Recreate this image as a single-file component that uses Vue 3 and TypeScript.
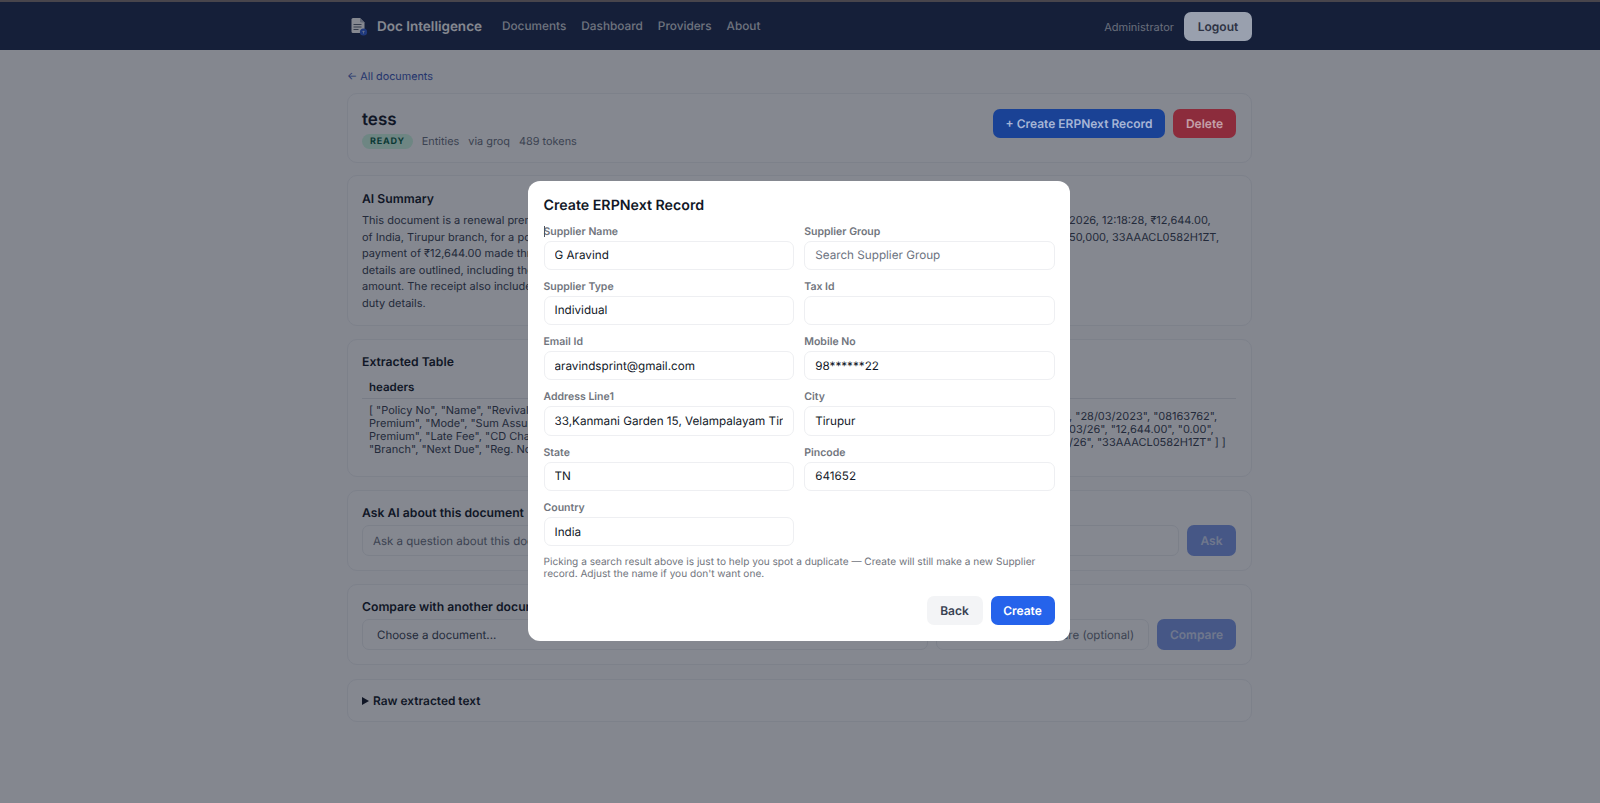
<template>
  <div class="app">
    <div class="top-strip"></div>
    <header class="navbar">
      <div class="navbar__inner">
        <div class="brand">
          <svg class="brand__icon" width="24" height="24" viewBox="0 0 24 24" aria-hidden="true">
            <path d="M6 3h7l4.5 4.5V16a2 2 0 0 1-2 2H6a1.5 1.5 0 0 1-1.5-1.5v-12A1.5 1.5 0 0 1 6 3z" fill="#ffffff" />
            <path d="M13 3v3.5A1 1 0 0 0 14 7.5h3.5z" fill="#b9c0cc" />
            <path d="M6.5 9.5h8M6.5 12h8M6.5 14.5h5" stroke="#5b6474" stroke-width="1.1" fill="none" />
            <circle cx="16.5" cy="17" r="3.6" fill="#2f5fd8" />
            <path d="M16.5 18.6v-2.6M15.4 17l1.1-1.1 1.1 1.1" stroke="#dbe6ff" stroke-width=".7" fill="none" />
          </svg>
          <span class="brand__name">Doc Intelligence</span>
        </div>
        <nav class="nav">
          <a v-for="item in navItems" :key="item">{{ item }}</a>
        </nav>
        <div class="user">
          <span>Administrator</span>
          <button class="btn btn--logout lifted">Logout</button>
        </div>
      </div>
    </header>

    <main class="page">
      <a class="back">← All documents</a>

      <section class="card title-card">
        <div>
          <h1>tess</h1>
          <div class="meta">
            <span class="badge">READY</span>
            <span>Entities</span>
            <span>via groq</span>
            <span>489 tokens</span>
          </div>
        </div>
        <div class="actions">
          <button class="btn btn--primary lifted">+ Create ERPNext Record</button>
          <button class="btn btn--danger lifted">Delete</button>
        </div>
      </section>

      <section class="card summary-card">
        <h2>AI Summary</h2>
        <div class="summary">
          <div v-for="(row, i) in summaryRows" :key="i" class="split">
            <span class="split__left">{{ row[0] }}</span>
            <span>{{ row[1] }}</span>
          </div>
        </div>
      </section>

      <section class="card">
        <h2>Extracted Table</h2>
        <div class="table-head">headers</div>
        <div class="table-body">
          <div class="table-cell table-cell--left">
            <div v-for="line in headerLines" :key="line">{{ line }}</div>
          </div>
          <div class="table-cell table-cell--right">
            <div v-for="line in rowLines" :key="line">{{ line }}</div>
          </div>
        </div>
      </section>

      <section class="card">
        <h2>Ask AI about this document</h2>
        <div class="control-row">
          <input class="control control--grow" placeholder="Ask a question about this document..." />
          <button class="btn btn--muted btn--ask">Ask</button>
        </div>
      </section>

      <section class="card">
        <h2>Compare with another document</h2>
        <div class="control-row">
          <select class="control control--grow control--select">
            <option>Choose a document...</option>
          </select>
          <input class="control control--focus" placeholder="Which fields to compare (optional)" />
          <button class="btn btn--muted btn--compare">Compare</button>
        </div>
      </section>

      <section class="card raw">
        <span class="raw__arrow"></span>
        <span>Raw extracted text</span>
      </section>
    </main>

    <div class="overlay">
      <div class="modal">
        <h3>Create ERPNext Record</h3>
        <div class="form-grid">
          <label v-for="(field, i) in fields" :key="field.label" class="field">
            <span class="field__label">
              <i v-if="i === 0" class="caret"></i>{{ field.label }}
            </span>
            <input class="field__input" :value="field.value" :placeholder="field.placeholder" />
          </label>
        </div>
        <p class="hint">
          Picking a search result above is just to help you spot a duplicate — Create will still make a new Supplier
          record. Adjust the name if you don't want one.
        </p>
        <div class="modal__actions">
          <button class="btn btn--back">Back</button>
          <button class="btn btn--create">Create</button>
        </div>
      </div>
    </div>
  </div>
</template>

<script setup lang="ts">
interface Field {
  label: string;
  value?: string;
  placeholder?: string;
}

const navItems = ['Documents', 'Dashboard', 'Providers', 'About'];

// left part runs under the modal, right part starts where the modal ends
const summaryRows: [string, string][] = [
  ['This document is a renewal premium receipt issued by the Life Insurance Corporation', '2026, 12:18:28, ₹12,644.00,'],
  ['of India, Tirupur branch, for a policy held by the named policyholder', '50,000, 33AAACL0582H1ZT,'],
  ['payment of ₹12,644.00 made through the listed channel on the receipt date', ''],
  ['details are outlined, including the plan, mode, sum assured and premium', ''],
  ['amount. The receipt also includes the GST registration number and stamp', ''],
  ['duty details.', '']
];

const headerLines = [
  '[ "Policy No", "Name", "Revival Date", "Receipt No", "Plan", "Term"',
  'Premium", "Mode", "Sum Assured", "Date of Commencement", "Agent"',
  'Premium", "Late Fee", "CD Charges", "GST", "Total Amount"',
  '"Branch", "Next Due", "Reg. No" ]'
];

const rowLines = [', "28/03/2023", "08163762",', '03/26", "12,644.00", "0.00",', '/26", "33AAACL0582H1ZT" ] ]'];

const fields: Field[] = [
  { label: 'Supplier Name', value: 'G Aravind' },
  { label: 'Supplier Group', placeholder: 'Search Supplier Group' },
  { label: 'Supplier Type', value: 'Individual' },
  { label: 'Tax Id', value: '' },
  { label: 'Email Id', value: 'aravindsprint@gmail.com' },
  { label: 'Mobile No', value: '98******22' },
  { label: 'Address Line1', value: '33,Kanmani Garden 15, Velampalayam Tirupur' },
  { label: 'City', value: 'Tirupur' },
  { label: 'State', value: 'TN' },
  { label: 'Pincode', value: '641652' },
  { label: 'Country', value: 'India' }
];
</script>

<style>
html,
body {
  margin: 0;
  background: #fcfcfd;
}
</style>

<style scoped>
.app {
  min-height: 803px;
  background: #fcfcfd;
  color: #111827;
  font-family: Inter, "Liberation Sans", sans-serif;
  text-rendering: geometricPrecision;
}

.top-strip {
  height: 2px;
  background: #837674;
}

.navbar {
  height: 48px;
  background: #1c2a4f;
}

.navbar__inner {
  display: flex;
  align-items: center;
  width: 905px;
  height: 100%;
  margin-left: 347px;
}

.brand {
  display: flex;
  align-items: center;
  gap: 6px;
  color: #ffffff;
  font-size: 13.5px;
  font-weight: 600;
}

.brand__icon {
  flex-shrink: 0;
  margin-top: 2px;
}

.brand__name {
  margin-top: 1px;
}

.nav {
  display: flex;
  gap: 15px;
  margin-bottom: 1px;
  margin-left: 20px;
  color: #d1d5db;
  font-size: 11.8px;
  font-weight: 500;
}

.user {
  display: flex;
  align-items: center;
  gap: 10px;
  margin-left: auto;
  color: #c4c9d4;
  font-size: 11px;
}

.user span {
  margin-top: 2px;
}

.btn {
  border: 0;
  border-radius: 7px;
  font-family: inherit;
  font-size: 12px;
  font-weight: 600;
  text-rendering: geometricPrecision;
}

.lifted {
  position: relative;
  z-index: 20;
}

.btn--logout {
  width: 68px;
  height: 29px;
  background: #99a0ae;
  color: #2e3344;
}

.page {
  width: 905px;
  margin-left: 347px;
  padding-top: 20px;
}

.back {
  display: block;
  height: 14px;
  margin-bottom: 9px;
  color: #3a57b8;
  font-size: 10.8px;
  line-height: 14px;
}

.card {
  box-sizing: border-box;
  margin-bottom: 13px;
  padding: 14px 15px 14px 14px;
  border: 1px solid #eef0f3;
  border-radius: 10px;
  background: #ffffff;
}

.card h2 {
  margin: 0;
  font-size: 12.2px;
  font-weight: 600;
  line-height: 16px;
}

.title-card {
  display: flex;
  align-items: flex-start;
  justify-content: space-between;
  height: 70px;
  margin-bottom: 12px;
  padding: 15px 15px 0 14px;
}

.title-card h1 {
  margin: 1px 0 3px;
  font-size: 17px;
  font-weight: 600;
  line-height: 20px;
}

.meta {
  display: flex;
  align-items: center;
  gap: 9px;
  color: #6b7280;
  font-size: 10.9px;
}

.badge {
  margin-top: 1px;
  padding: 1px 8px;
  border-radius: 999px;
  background: #d1fae5;
  color: #065f46;
  font-size: 9px;
  font-weight: 700;
  letter-spacing: 0.8px;
  line-height: 13px;
}

.actions {
  display: flex;
  gap: 8px;
}

.btn--primary {
  width: 172px;
  height: 29px;
  background: #1a4295;
  color: #a6b5d6;
}

.btn--danger {
  width: 63px;
  height: 29px;
  background: #8c2c3c;
  color: #c4a0a9;
}

.summary-card {
  padding-top: 15px;
}

.summary {
  margin-top: 5px;
  color: #374151;
  font-size: 11px;
  line-height: 16.5px;
}

.split {
  display: flex;
  white-space: nowrap;
}

.split__left {
  flex: none;
  width: 707px;
  overflow: hidden;
}

.table-head {
  margin-top: 10px;
  padding: 0 7px 3px;
  border-bottom: 1px solid #e5e7eb;
  font-size: 11.5px;
  font-weight: 600;
  line-height: 15px;
}

.table-body {
  display: flex;
  padding: 5px 0 6px 7px;
  color: #374151;
  font-size: 11px;
  line-height: 13px;
  white-space: nowrap;
}

.table-cell--left {
  flex: none;
  width: 700px;
  overflow: hidden;
}

.table-cell--right {
  padding-top: 6px;
}

.control-row {
  display: flex;
  gap: 8px;
  margin-top: 4px;
}

.control {
  box-sizing: border-box;
  height: 31px;
  padding: 0 10px;
  border: 1px solid #eceef1;
  border-radius: 7px;
  background: #ffffff;
  color: #111827;
  font-family: inherit;
  font-size: 11.5px;
  text-rendering: geometricPrecision;
}

.control::placeholder {
  color: #6b7280;
}

.control--grow {
  flex: 1;
  min-width: 0;
}

.control--focus {
  flex: none;
  width: 213px;
}

.control--select {
  color: #374151;
}

.btn--muted {
  height: 31px;
  background: #7f9bea;
  color: #d3ddf7;
}

.btn--ask {
  width: 49px;
}

.btn--compare {
  width: 79px;
}

.raw {
  display: flex;
  align-items: center;
  gap: 4px;
  height: 43px;
  margin-top: 14px;
  padding: 0 14px;
  font-size: 11.9px;
  font-weight: 600;
}

.raw__arrow {
  width: 0;
  height: 0;
  border-top: 4px solid transparent;
  border-bottom: 4px solid transparent;
  border-left: 7px solid #111827;
}

.overlay {
  position: fixed;
  inset: 0;
  z-index: 10;
  display: flex;
  justify-content: center;
  align-items: flex-start;
  padding-top: 181px;
  background: rgba(16, 22, 38, 0.51);
}

.modal {
  position: relative;
  z-index: 30;
  box-sizing: border-box;
  width: 542px;
  height: 460px;
  margin-left: -2px;
  padding: 16px 15.5px;
  border-radius: 12px;
  background: #ffffff;
}

.modal h3 {
  margin: 0 0 9.5px;
  color: #111827;
  font-size: 14.2px;
  font-weight: 600;
  line-height: 18px;
}

.form-grid {
  display: grid;
  grid-template-columns: 1fr 1fr;
  gap: 10px 10.5px;
}

.field {
  display: block;
  min-width: 0;
}

.field__label {
  position: relative;
  display: block;
  margin-bottom: 3px;
  color: #71757d;
  font-size: 10.5px;
  font-weight: 600;
  line-height: 13px;
}

.caret {
  position: absolute;
  top: 1px;
  left: 0;
  width: 1px;
  height: 11px;
  background: #4b5563;
}

.field__input {
  display: block;
  box-sizing: border-box;
  width: 100%;
  height: 29.3px;
  padding: 0 10px;
  border: 1px solid #eeeff2;
  border-radius: 7px;
  background: #ffffff;
  color: #111827;
  font-family: inherit;
  font-size: 11.7px;
  text-rendering: geometricPrecision;
}

.field__input::placeholder {
  color: #6b7280;
}

.hint {
  margin: 10px 0 0;
  color: #71757d;
  font-size: 10.1px;
  line-height: 12px;
}

.modal__actions {
  display: flex;
  justify-content: flex-end;
  gap: 8px;
  margin-top: 16px;
}

.btn--back {
  width: 56px;
  height: 29px;
  background: #f3f4f6;
  color: #374151;
}

.btn--create {
  width: 64px;
  height: 29px;
  background: #2563eb;
  color: #ffffff;
}
</style>
